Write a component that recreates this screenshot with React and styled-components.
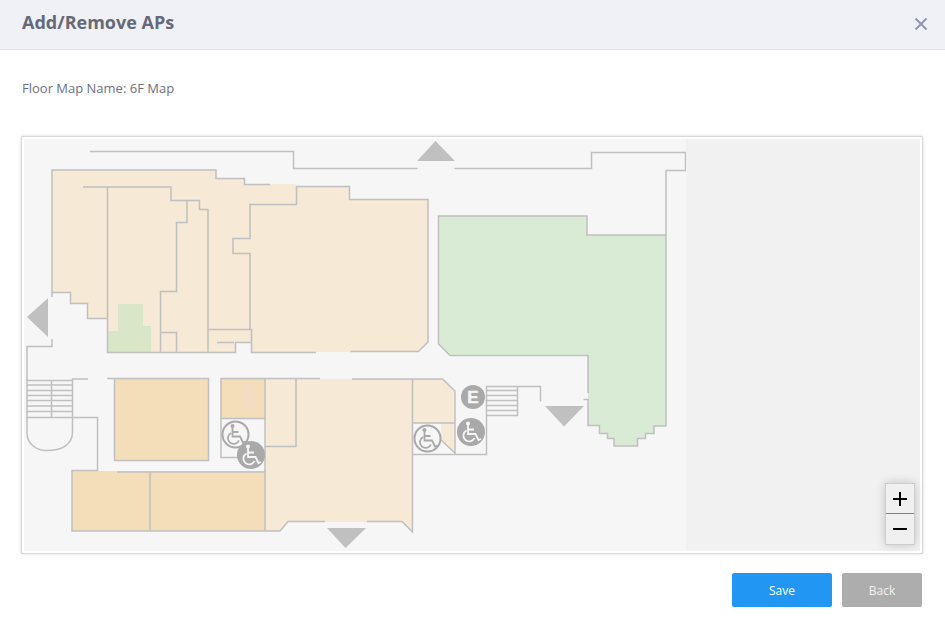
import React, { useState } from 'react';
import styled, { createGlobalStyle } from 'styled-components';

const GlobalStyle = createGlobalStyle`
  * {
    box-sizing: border-box;
  }

  body {
    margin: 0;
    background: #fff;
    color: #6b7080;
    font-family: 'Open Sans', 'Noto Sans', sans-serif;
    font-size: 13px;
  }
`;

const Header = styled.header`
  display: flex;
  align-items: center;
  justify-content: space-between;
  height: 50px;
  padding: 0 15px 2px 22px;
  background: #eff1f6;
  border-bottom: 1px solid #dfe0e6;
`;

const Title = styled.h1`
  margin: 0;
  padding-bottom: 4px;
  color: #666a78;
  font-size: 18px;
  font-weight: 700;
  line-height: 24px;
`;

const CloseButton = styled.button`
  display: flex;
  padding: 2px;
  border: none;
  background: none;
  color: #8f96ad;
  cursor: pointer;
`;

const Content = styled.main`
  padding: 28px 22px 12px 21px;
`;

const MapName = styled.p`
  margin: 0 0 38px 1px;
  line-height: 20px;
`;

const MapFrame = styled.section`
  position: relative;
  padding: 2px;
  border: 1px solid #d9d9d9;
  box-shadow: 0 0 3px rgba(0, 0, 0, 0.15);
`;

const MapArea = styled.div`
  overflow: hidden;
  background: #f1f1f1;
`;

const Plan = styled.svg`
  display: block;
  background: #f6f6f6;
`;

const Room = styled.path`
  fill: ${({ $color }) => $color};
`;

const Wall = styled.path`
  fill: none;
  stroke: #c0c0c0;
  stroke-width: 1.5;
`;

const Arrow = styled.path`
  fill: #c0c0c0;
`;

const ElevatorText = styled.text`
  fill: #f5f5f5;
  stroke: #f5f5f5;
  stroke-width: 0.5;
  font-family: 'Liberation Sans', sans-serif;
  font-size: 17px;
  font-weight: 700;
  text-anchor: middle;
`;

const ZoomControl = styled.div`
  position: absolute;
  right: 7px;
  bottom: 8px;
  display: flex;
  flex-direction: column;
  border: 1px solid #ccc;
  box-shadow: 0 0 10px rgba(0, 0, 0, 0.2);
`;

const ZoomButton = styled.button`
  display: flex;
  align-items: center;
  justify-content: center;
  width: 28px;
  height: 29px;
  padding: 0;
  border: none;
  background: #f0f0f0;
  color: #000;
  cursor: pointer;

  & + & {
    height: 31px;
    border-top: 1px solid #808080;
  }
`;

const Footer = styled.footer`
  display: flex;
  justify-content: flex-end;
  gap: 10px;
  padding: 7px 23px 12px;
`;

const Button = styled.button`
  width: ${({ $primary }) => ($primary ? '100px' : '80px')};
  height: 34px;
  border: none;
  border-radius: 2px;
  background: ${({ $primary }) => ($primary ? '#2196f3' : '#adadad')};
  color: ${({ $primary }) => ($primary ? '#fff' : '#f1f1f1')};
  font-family: inherit;
  font-size: 12px;
  cursor: pointer;
`;

const BEIGE = '#f6e9d6';
const ORANGE = '#f4deba';
const GREEN = '#d9ebd5';

const rooms = [
  { color: BEIGE, d: 'M52 170H216V178H244V184H296V186H350V200H428V342L418 352H252V343H235V352H107V318H87V303H70V292H52Z' },
  { color: '#d9e6c8', d: 'M118 304H143V326H151V352H108V331H118Z' },
  { color: GREEN, d: 'M438 216H587V235H666V426H654V434H645V439H638V446H614V439H607V434H599V426H588V356H450L438 344Z' },
  { color: ORANGE, d: 'M114 378H209V461H114Z' },
  { color: ORANGE, d: 'M221 378H265V418H221Z' },
  { color: ORANGE, d: 'M72 471H265V531H72Z' },
  { color: BEIGE, d: 'M265 379H412V532L402 522H288L280 531H265Z' },
  { color: BEIGE, d: 'M412 379H442L455 391V423H412Z' },
  { color: BEIGE, d: 'M441 423H455V453L441 440Z' },
];

const walls = [
  // outer walls
  'M90 151.5H293.5V168.5H417.5M454.5 168.5H591.5V152.5H685.5V170.5H666V235',
  'M52 297V170H216V178.5H244.5V184.5H270',
  'M52 292.5H70.5V303.5H87.5V318.5H107.5',
  'M296.5 204V186.5H349.5V199.5H428V342L418.5 351.5H350.5',
  // upper rooms
  'M83 187H171V200.5H199.5V209.5H208V352',
  'M107.5 187V352.5H235.5V342.5H251.5',
  'M187 200V222.5H176.5V291.5H160.5V352M160.5 332.5H176.5V352',
  'M297 204.5H250V238.5H233V253.5H250V329',
  'M208 329.5H251.5V352.5H316M217 342.5H234',
  // green hall
  'M588 393V355.5H450L438.5 344V216H587V235H666V426H654V433.5H645.5V438.5H637.5V446H614V438.5H607.5V433.5H599.5V425.5H588V399.5H583.5',
  // stairs on the left
  'M52 339V346.5H27V433C27 443 35 450 45 450.5C61 451 72.5 445 72.5 432V379H88',
  'M27 380.5H72.5M27 385H72.5M27 390.5H72.5M27 395.5H72.5M27 400.5H72.5M27 406H72.5M27 411.5H72.5M51.5 380V417.5',
  'M27 417.5H97.5V470.5H72V531H280L288 521.5H325',
  // lower rooms
  'M107 378.5H208.5V460.5H114.5V378.5',
  'M117 472H265M150 472V531',
  'M240 457.5H221V378.5H320M221 418.5H265M265 378.5V531',
  'M296 378.5V446.5H265',
  'M352 379H442.5L455 391V454M412.5 379V532L402 521.5H367',
  'M412.5 423H455M441 440L455 453M412.5 454.5H486.5V386.5H540.5V401.5',
  'M486.5 390.5H517.5M486.5 395.5H517.5M486.5 400.5H517.5M486.5 405.5H517.5M486.5 410.5H517.5M486.5 415.5H517.5V386.5',
];

const arrows = [
  'M435.5 141L455 161H417Z',
  'M27 317L48 298V337Z',
  'M327 528H366L345.5 548Z',
  'M545 406H584L564 426.5Z',
];

const Wheelchair = ({ x, y, filled }) => {
  const color = filled ? '#f7f7f7' : '#a9a9a9';
  return (
    <g transform={`translate(${x} ${y})`}>
      <circle
        r={filled ? 14 : 13}
        fill={filled ? '#a9a9a9' : '#f6f6f6'}
        stroke="#a9a9a9"
        strokeWidth={filled ? 0 : 2}
      />
      <circle cx="-3" cy="-8.5" r="2" fill={color} />
      <path
        d="M-3 -7V2H4.5L7.5 8L10 7M-3 -2.5H3M-4.5 -1.5A5.8 5.8 0 1 0 3.5 6"
        fill="none"
        stroke={color}
        strokeWidth="1.8"
      />
    </g>
  );
};

const FloorPlan = () => (
  <Plan width="662" height="412" viewBox="24 139 662 412" role="img" aria-label="6F Map">
    {rooms.map(({ color, d }) => (
      <Room key={d} $color={color} d={d} />
    ))}
    <ellipse cx="250" cy="397" rx="6" ry="13" fill="#f4dcc4" />
    {walls.map((d) => (
      <Wall key={d} d={d} />
    ))}
    {arrows.map((d) => (
      <Arrow key={d} d={d} />
    ))}
    <Wheelchair x={235.5} y={434.5} />
    <Wheelchair x={251} y={455} filled />
    <Wheelchair x={427.5} y={438.5} />
    <Wheelchair x={471} y={432} filled />
    <circle cx="473" cy="397" r="12" fill="#a9a9a9" />
    <ElevatorText x="473" y="403">E</ElevatorText>
  </Plan>
);

const App = () => {
  const [zoom, setZoom] = useState(1);

  return (
    <>
      <GlobalStyle />
      <Header>
        <Title>Add/Remove APs</Title>
        <CloseButton type="button" aria-label="Close">
          <svg width="14" height="14" viewBox="0 0 14 14">
            <path d="M1.5 1.5L12.5 12.5M12.5 1.5L1.5 12.5" stroke="currentColor" strokeWidth="2" />
          </svg>
        </CloseButton>
      </Header>
      <Content>
        <MapName>Floor Map Name: 6F Map</MapName>
        <MapFrame>
          <MapArea style={{ zoom }}>
            <FloorPlan />
          </MapArea>
          <ZoomControl>
            <ZoomButton type="button" aria-label="Zoom in" onClick={() => setZoom(zoom + 0.25)}>
              <svg width="14" height="14" viewBox="0 0 14 14">
                <path d="M0 7H14M7 0V14" stroke="currentColor" strokeWidth="2" />
              </svg>
            </ZoomButton>
            <ZoomButton type="button" aria-label="Zoom out" onClick={() => setZoom(Math.max(1, zoom - 0.25))}>
              <svg width="14" height="14" viewBox="0 0 14 14">
                <path d="M0 7H14" stroke="currentColor" strokeWidth="2" />
              </svg>
            </ZoomButton>
          </ZoomControl>
        </MapFrame>
      </Content>
      <Footer>
        <Button type="button" $primary>Save</Button>
        <Button type="button">Back</Button>
      </Footer>
    </>
  );
};

export default App;
